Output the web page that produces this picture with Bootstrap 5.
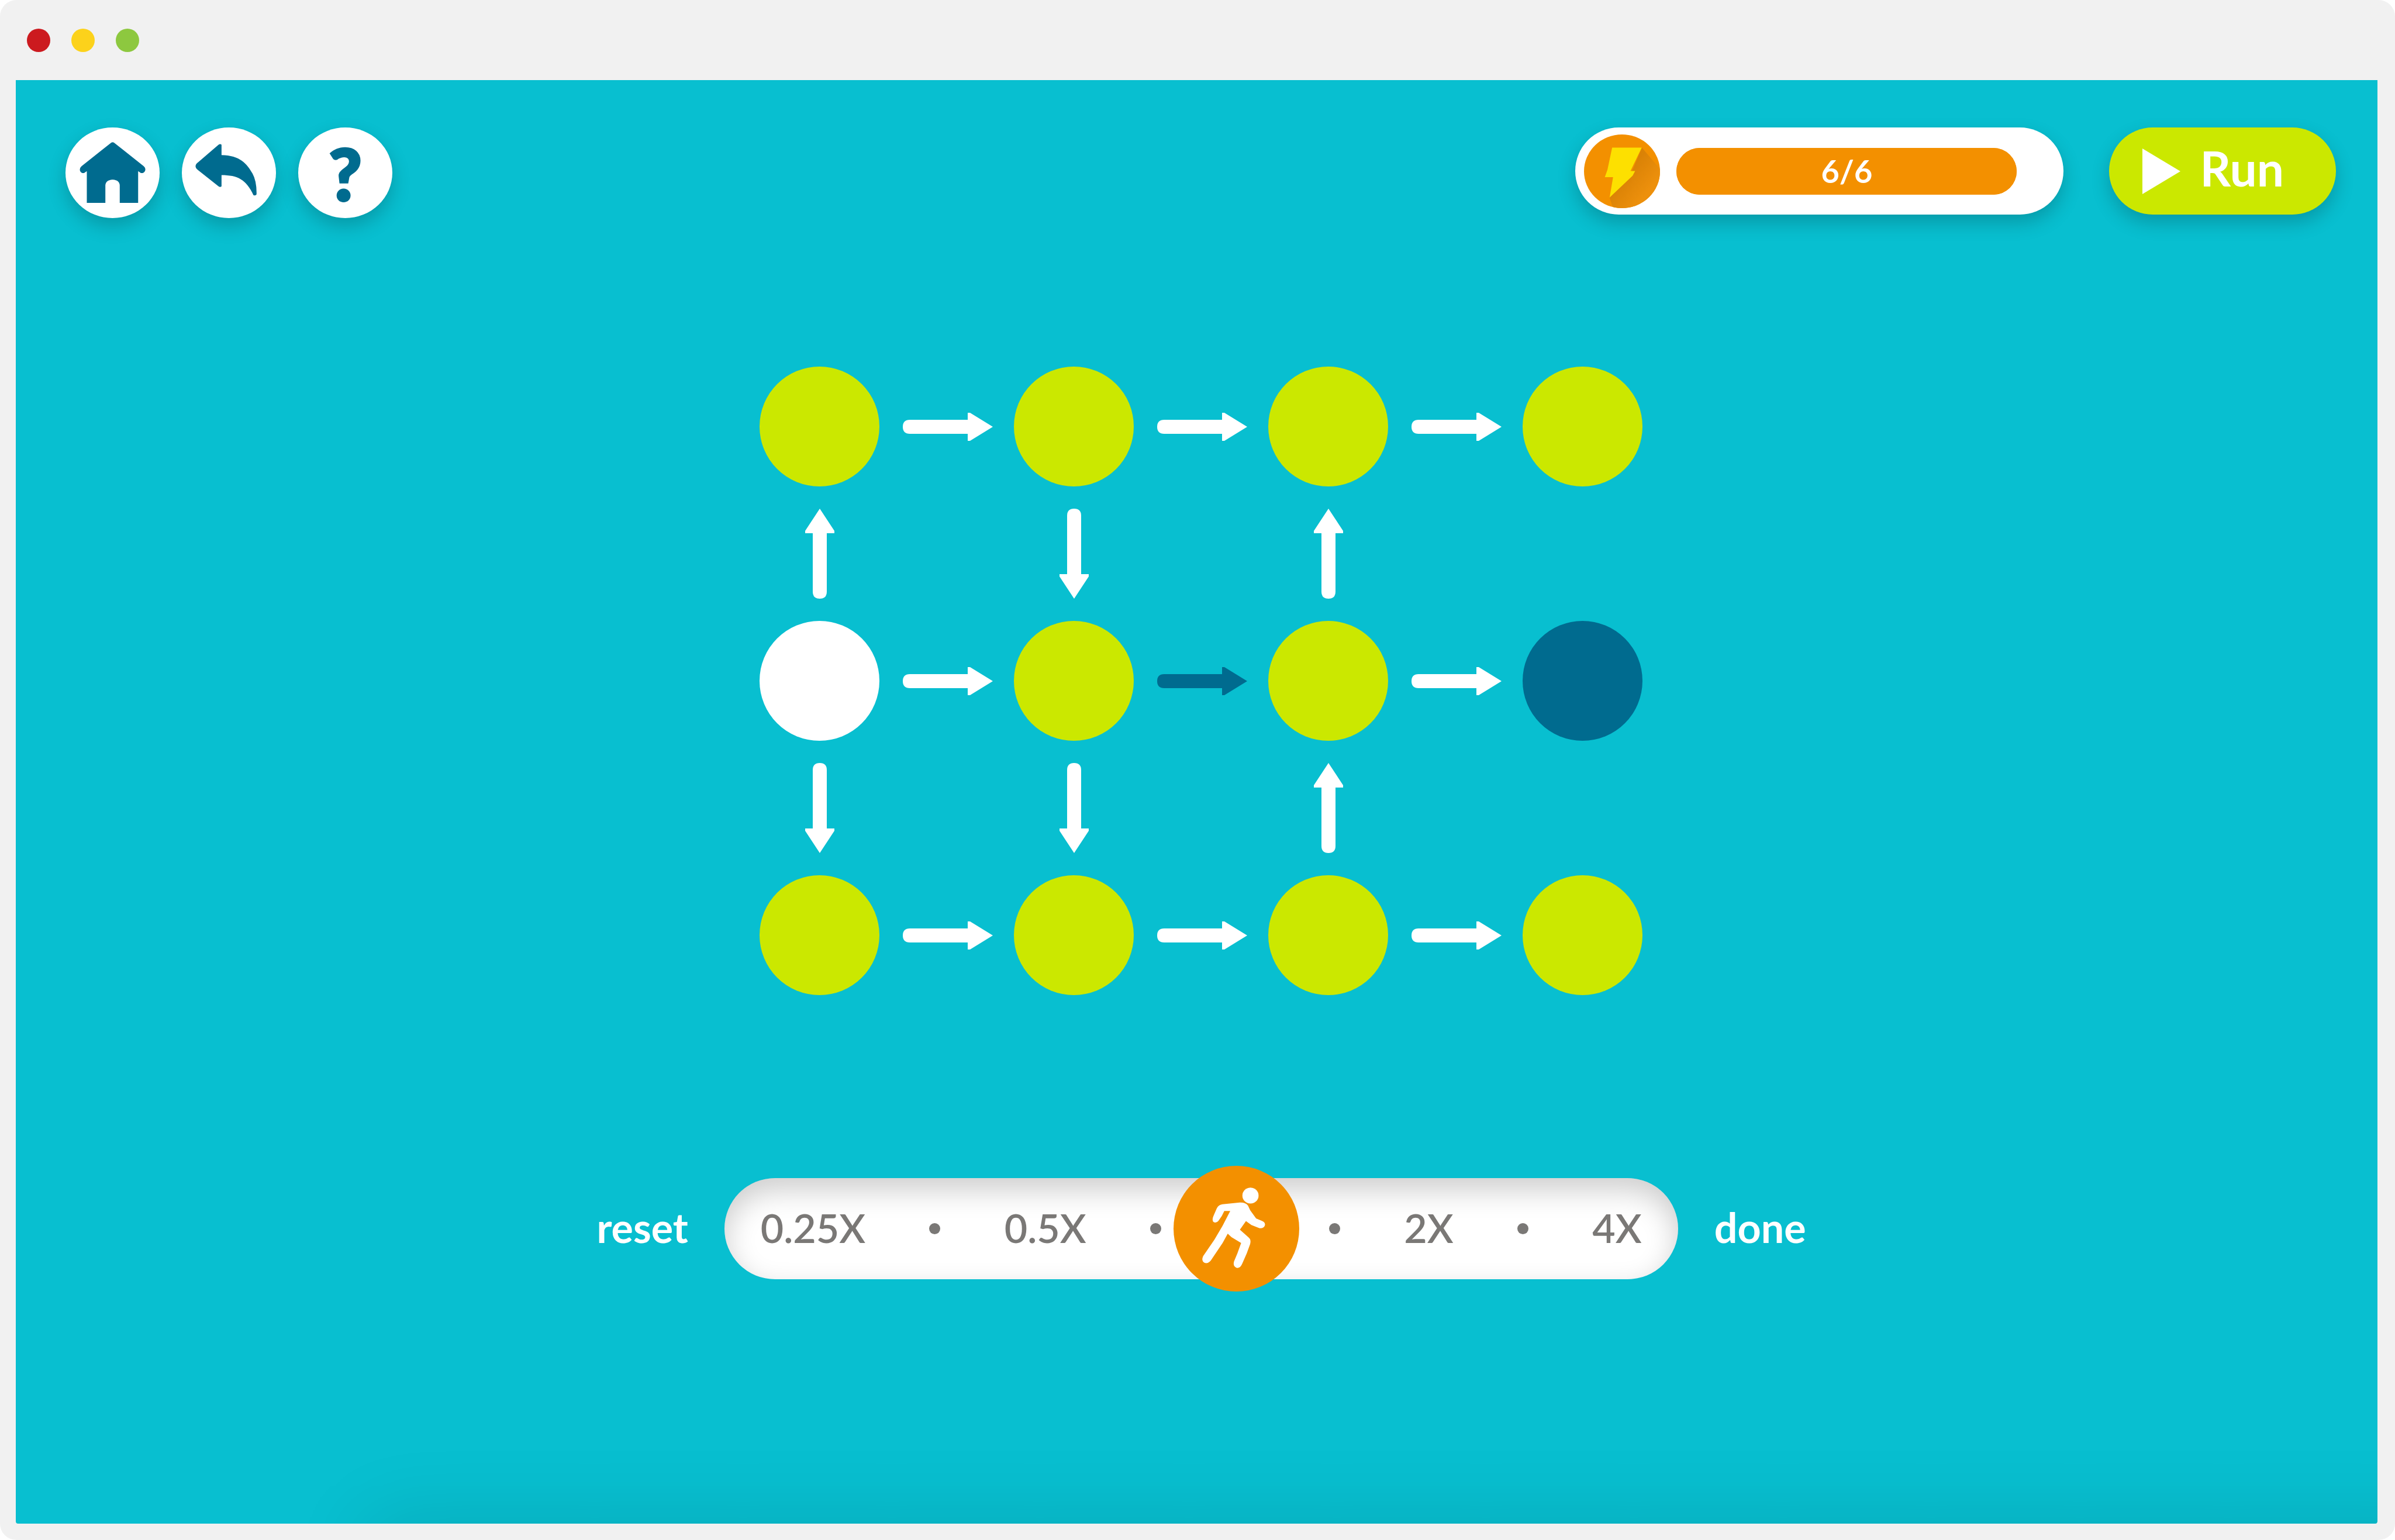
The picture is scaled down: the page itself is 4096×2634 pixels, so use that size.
<!DOCTYPE html>
<html lang="en">
<head>
<meta charset="utf-8">
<meta name="viewport" content="width=device-width, initial-scale=1">
<title>Path puzzle</title>
<link href="https://cdn.jsdelivr.net/npm/bootstrap@5.3.0/dist/css/bootstrap.min.css" rel="stylesheet">
<style>
  :root {
    --teal: #08bfd0;
    --navy: #006b8f;
    --lime: #cbe800;
    --orange: #f39000;
    --drop: 0 14px 32px rgba(0, 0, 0, .2);
  }
  body { background: #fff; font-family: Lato, "Open Sans", sans-serif; }
  .window { background: #f1f1f1; border-radius: 28px; padding: 0 30px 28px 27px; }
  .titlebar { height: 137px; gap: 36px; padding: 0 19px; }
  .light { width: 40px; height: 40px; }
  .light-close { background: #cc1a1f; }
  .light-min { background: #fcd21b; }
  .light-max { background: #8dc83f; }

  .stage { background: var(--teal); border-radius: 0 0 4px 4px; }
  .tools { padding: 81px 71px 0 85px; }
  .tool-group { gap: 38px; }
  .hud { gap: 78px; }
  .tool { width: 161px; height: 155px; color: var(--navy); box-shadow: var(--drop); font-size: 122px; line-height: 1; font-weight: 900; }
  .tool:hover { color: var(--navy); background: #fff; }
  .tool-glyph { -webkit-text-stroke: 4px currentColor; }
  .energy { height: 149px; gap: 28px; padding: 0 80px 0 15px; box-shadow: var(--drop); }
  .energy-icon { width: 130px; height: 126px; background: var(--orange); }
  .energy-bar { width: 582px; height: 80px; background: var(--orange); border-radius: 40px; font-size: 54px; }
  .energy-fill { background: var(--orange); }
  .run { height: 149px; gap: 33px; padding: 0 89px 0 57px; background: var(--lime); box-shadow: var(--drop); font-size: 82px; line-height: 1; font-weight: 700; }
  .run span { padding-bottom: 12px; }

  .board { margin-top: 254px; padding-left: 14px; }
  .graph { display: grid; grid-template: 205px 230px 205px 230px 205px / 205px 230px 205px 230px 205px 230px 205px; color: #fff; }
  .node { background: var(--lime); }
  .node-start { background: #fff; }
  .node-goal { background: var(--navy); }
  .edge-used { color: var(--navy); }
  .graph svg { width: 100%; height: 100%; }

  .speed { margin-top: 313px; padding-left: 16px; gap: 62px; line-height: 1; }
  .speed-link { color: #fff; font-weight: 700; line-height: 1; font-size: 70px; padding: 0 0 6px; }
  .speed-track { width: 1631px; height: 173px; padding: 0 62px; background: #fff; color: #7a7876; box-shadow: inset 0 20px 50px rgba(0, 0, 0, .2); font-size: 68px; font-weight: 600; }
  .speed-track span { padding-bottom: 4px; }
  .tick { width: 19px; height: 19px; background: #7a7876; }
  .slot { width: 68px; }
  .speed-input { inset: -21px 0; height: 215px; -webkit-appearance: none; appearance: none; background: transparent; }
  .speed-input::-webkit-slider-thumb { -webkit-appearance: none; width: 215px; height: 215px; border-radius: 50%; background: var(--orange); }
  .speed-input::-moz-range-thumb { width: 215px; height: 215px; border: 0; border-radius: 50%; background: var(--orange); }
  .runner { top: -21px; width: 215px; height: 215px; }

  .sheet { left: 604px; right: -300px; top: 100%; height: 400px; box-shadow: 0 0 140px rgba(0, 0, 0, .12); }
</style>
</head>
<body>
<svg class="d-none" aria-hidden="true">
  <symbol id="right" viewBox="0 0 230 205"><path fill="currentColor" d="M52 91H151V79H155L194 103L155 127H151V115H52Q40 115 40 103T52 91Z"/></symbol>
  <symbol id="up" viewBox="0 0 205 230"><path fill="currentColor" d="M91 180V80H78V76L103 38L128 76V80H115V180Q115 192 103 192T91 180Z"/></symbol>
  <symbol id="down" viewBox="0 0 205 230"><path fill="currentColor" d="M91 50V150H78V154L103 192L128 154V150H115V50Q115 38 103 38T91 50Z"/></symbol>
</svg>

<div class="window d-flex flex-column min-vh-100">
  <div class="titlebar d-flex align-items-center">
    <span class="light light-close rounded-circle"></span>
    <span class="light light-min rounded-circle"></span>
    <span class="light light-max rounded-circle"></span>
  </div>

  <main class="stage flex-grow-1 position-relative overflow-hidden">
    <header class="tools d-flex justify-content-between align-items-start">
      <nav class="tool-group d-flex">
        <button type="button" class="tool btn bg-white rounded-circle border-0 p-0 d-flex" aria-label="Home">
          <svg width="100%" height="100%" viewBox="30 40 609 581" fill="currentColor"><path d="M320 140Q335 126 350 140L536 288Q552 302 544 320Q534 336 518 332L500 320V525H381V415Q381 378 335 375Q288 378 288 415V525H168V320L150 332Q134 336 125 320Q118 302 134 288Z"/></svg>
        </button>
        <button type="button" class="tool btn bg-white rounded-circle border-0 p-0 d-flex" aria-label="Back">
          <svg width="100%" height="100%" viewBox="26 40 605 581" fill="currentColor"><path d="M114 287Q116 272 132 262L262 150Q272 143 281 150V217C400 218 445 275 480 335Q508 385 506 470Q500 480 486 474C440 375 385 346 281 346V418Q272 426 262 418L128 312Q114 300 114 287Z"/></svg>
        </button>
        <button type="button" class="tool tool-glyph btn bg-white rounded-circle border-0 p-0 d-flex align-items-center justify-content-center" aria-label="Help">?</button>
      </nav>

      <div class="hud d-flex">
        <div class="energy bg-white rounded-pill d-flex align-items-center">
          <svg class="energy-icon rounded-circle" viewBox="27 33 489 474" preserveAspectRatio="none">
            <defs><linearGradient id="shade" gradientUnits="userSpaceOnUse" x1="290" y1="300" x2="430" y2="410"><stop offset="0" stop-color="#da8206"/><stop offset="1" stop-color="#ed900c"/></linearGradient></defs>
            <path fill="url(#shade)" d="M400 118L520 260V510H215L192 440L335 270Z"/>
            <path fill="#fde000" d="M208 118H398L326 268H356L340 298L192 438L214 308H161L178 260Z"/>
          </svg>
          <div class="energy-bar progress" role="progressbar" aria-label="Energy" aria-valuenow="6" aria-valuemin="0" aria-valuemax="6">
            <div class="energy-fill progress-bar fw-bold" style="width: 100%">6/6</div>
          </div>
        </div>
        <button type="button" class="run btn rounded-pill border-0 text-white d-flex align-items-center">
          <svg width="65" height="78" viewBox="0 0 65 78" fill="currentColor"><path d="M0 0L65 39L0 78Z"/></svg>
          <span>Run</span>
        </button>
      </div>
    </header>

    <section class="board d-flex justify-content-center">
      <div class="graph">
        <div class="node rounded-circle"></div><svg><use href="#right"/></svg>
        <div class="node rounded-circle"></div><svg><use href="#right"/></svg>
        <div class="node rounded-circle"></div><svg><use href="#right"/></svg>
        <div class="node rounded-circle"></div>

        <svg><use href="#up"/></svg><div></div>
        <svg><use href="#down"/></svg><div></div>
        <svg><use href="#up"/></svg><div></div><div></div>

        <div class="node node-start rounded-circle"></div><svg><use href="#right"/></svg>
        <div class="node rounded-circle"></div><svg class="edge-used"><use href="#right"/></svg>
        <div class="node rounded-circle"></div><svg><use href="#right"/></svg>
        <div class="node node-goal rounded-circle"></div>

        <svg><use href="#down"/></svg><div></div>
        <svg><use href="#down"/></svg><div></div>
        <svg><use href="#up"/></svg><div></div><div></div>

        <div class="node rounded-circle"></div><svg><use href="#right"/></svg>
        <div class="node rounded-circle"></div><svg><use href="#right"/></svg>
        <div class="node rounded-circle"></div><svg><use href="#right"/></svg>
        <div class="node rounded-circle"></div>
      </div>
    </section>

    <section class="speed d-flex justify-content-center align-items-center">
      <button type="button" class="speed-link btn border-0">reset</button>
      <div class="speed-track rounded-pill position-relative d-flex align-items-center justify-content-between">
        <span>0.25X</span><i class="tick rounded-circle"></i>
        <span>0.5X</span><i class="tick rounded-circle"></i>
        <span class="slot"></span><i class="tick rounded-circle"></i>
        <span>2X</span><i class="tick rounded-circle"></i>
        <span>4X</span>
        <input type="range" class="speed-input position-absolute w-100 m-0" min="0" max="100" step="any" value="54.25" aria-label="Speed">
        <svg class="runner position-absolute pe-none" style="left: calc((100% - 215px) * .5425)" viewBox="30 30 807 807" fill="#fff">
          <ellipse cx="524" cy="221" rx="52" ry="51"/>
          <path d="M345 277L455 266Q490 264 508 285L522 315L560 368L598 384Q622 394 616 414Q608 434 580 430L530 410L495 385L456 440L512 490Q530 505 522 532L500 592L472 656Q458 692 432 684Q410 674 418 645L440 592L464 525L402 488L378 465L345 525L280 622Q255 665 228 652Q206 640 220 610L292 505L345 415L394 320H356L340 352L318 384Q302 402 284 388Q276 374 288 348L308 302Q320 280 345 277Z"/>
        </svg>
      </div>
      <button type="button" class="speed-link btn border-0">done</button>
    </section>

    <div class="sheet position-absolute"></div>
  </main>
</div>
<script src="https://cdn.jsdelivr.net/npm/bootstrap@5.3.0/dist/js/bootstrap.bundle.min.js"></script>
</body>
</html>
